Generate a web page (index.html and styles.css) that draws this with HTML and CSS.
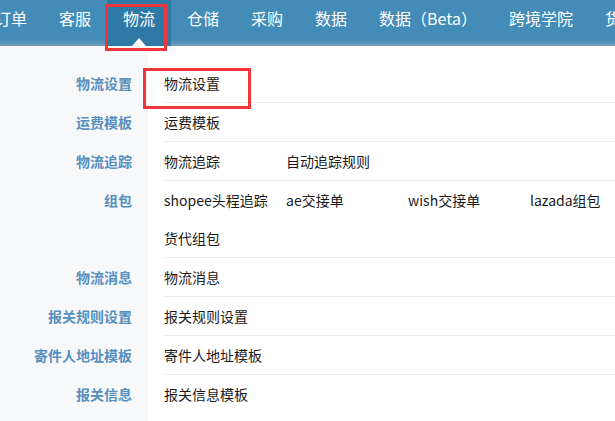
FILE: index.html
```html
<!DOCTYPE html>
<html lang="zh-CN">
<head>
<meta charset="utf-8">
<title>物流设置</title>
<link rel="stylesheet" href="styles.css">
</head>
<body>
<header class="topnav">
  <ul class="nav-list">
    <li class="nav-item">订单</li>
    <li class="nav-item">客服</li>
    <li class="nav-item active">物流</li>
    <li class="nav-item">仓储</li>
    <li class="nav-item">采购</li>
    <li class="nav-item">数据</li>
    <li class="nav-item">数据（Beta）</li>
    <li class="nav-item">跨境学院</li>
    <li class="nav-item">货代</li>
  </ul>
</header>
<main class="panel">
  <div class="row">
    <div class="label">物流设置</div>
    <div class="links"><a class="link marked">物流设置</a></div>
  </div>
  <div class="row">
    <div class="label">运费模板</div>
    <div class="links"><a class="link">运费模板</a></div>
  </div>
  <div class="row">
    <div class="label">物流追踪</div>
    <div class="links"><a class="link">物流追踪</a><a class="link">自动追踪规则</a></div>
  </div>
  <div class="row">
    <div class="label">组包</div>
    <div class="links"><a class="link">shopee头程追踪</a><a class="link">ae交接单</a><a class="link">wish交接单</a><a class="link">lazada组包</a><a class="link">货代组包</a></div>
  </div>
  <div class="row">
    <div class="label">物流消息</div>
    <div class="links"><a class="link">物流消息</a></div>
  </div>
  <div class="row">
    <div class="label">报关规则设置</div>
    <div class="links"><a class="link">报关规则设置</a></div>
  </div>
  <div class="row">
    <div class="label">寄件人地址模板</div>
    <div class="links"><a class="link">寄件人地址模板</a></div>
  </div>
  <div class="row">
    <div class="label">报关信息</div>
    <div class="links"><a class="link">报关信息模板</a></div>
  </div>
</main>
</body>
</html>
```

FILE: styles.css
```css
html, body {
  margin: 0;
  padding: 0;
  overflow: hidden;
  background: #fff;
}
body {
  font-family: "Noto Sans CJK SC", "Open Sans", sans-serif;
  width: 760px;
  height: 421px;
}
.topnav {
  height: 46px;
  background: linear-gradient(to bottom, #438cb8 0, #438cb8 39px, #5a93b8 43px, #7a9fb8 46px);
}
.nav-list {
  list-style: none;
  margin: 0 0 0 -21px;
  padding: 0;
  display: flex;
  white-space: nowrap;
}
.nav-item {
  position: relative;
  flex: none;
  padding: 0 16px;
  height: 46px;
  line-height: 37px;
  font-size: 16px;
  color: #fff;
}
.nav-item.active {
  background: #2f79a7;
}
.nav-item.active::before {
  content: "";
  position: absolute;
  left: 50%;
  bottom: 0;
  margin-left: -7px;
  border-left: 7px solid transparent;
  border-right: 7px solid transparent;
  border-bottom: 8px solid #f7f8fa;
}
.nav-item.active::after {
  content: "";
  position: absolute;
  left: -2px;
  top: 4px;
  width: 62px;
  height: 47px;
  box-sizing: border-box;
  border: 3px solid #f0363a;
}
.panel {
  display: block;
  padding-top: 18px;
  height: 375px;
  box-sizing: border-box;
  background: linear-gradient(to right, #f7f8fa 148px, #fff 148px);
}
.row {
  display: grid;
  grid-template-columns: 148px 1fr;
}
.label {
  text-align: right;
  padding-right: 16px;
  font-size: 14px;
  font-weight: bold;
  line-height: 38px;
  color: #5590c0;
}
.links {
  margin-left: 16px;
  display: flex;
  flex-wrap: wrap;
  border-bottom: 1px solid #eeeeee;
}
.row:last-child .links {
  border-bottom: none;
}
.link {
  position: relative;
  width: 122px;
  font-size: 14px;
  line-height: 38px;
  color: #1a1a1a;
  white-space: nowrap;
}
.link.marked::after {
  content: "";
  position: absolute;
  left: -21px;
  top: 4px;
  width: 108px;
  height: 41px;
  box-sizing: border-box;
  border: 3px solid #f0363a;
}
```
